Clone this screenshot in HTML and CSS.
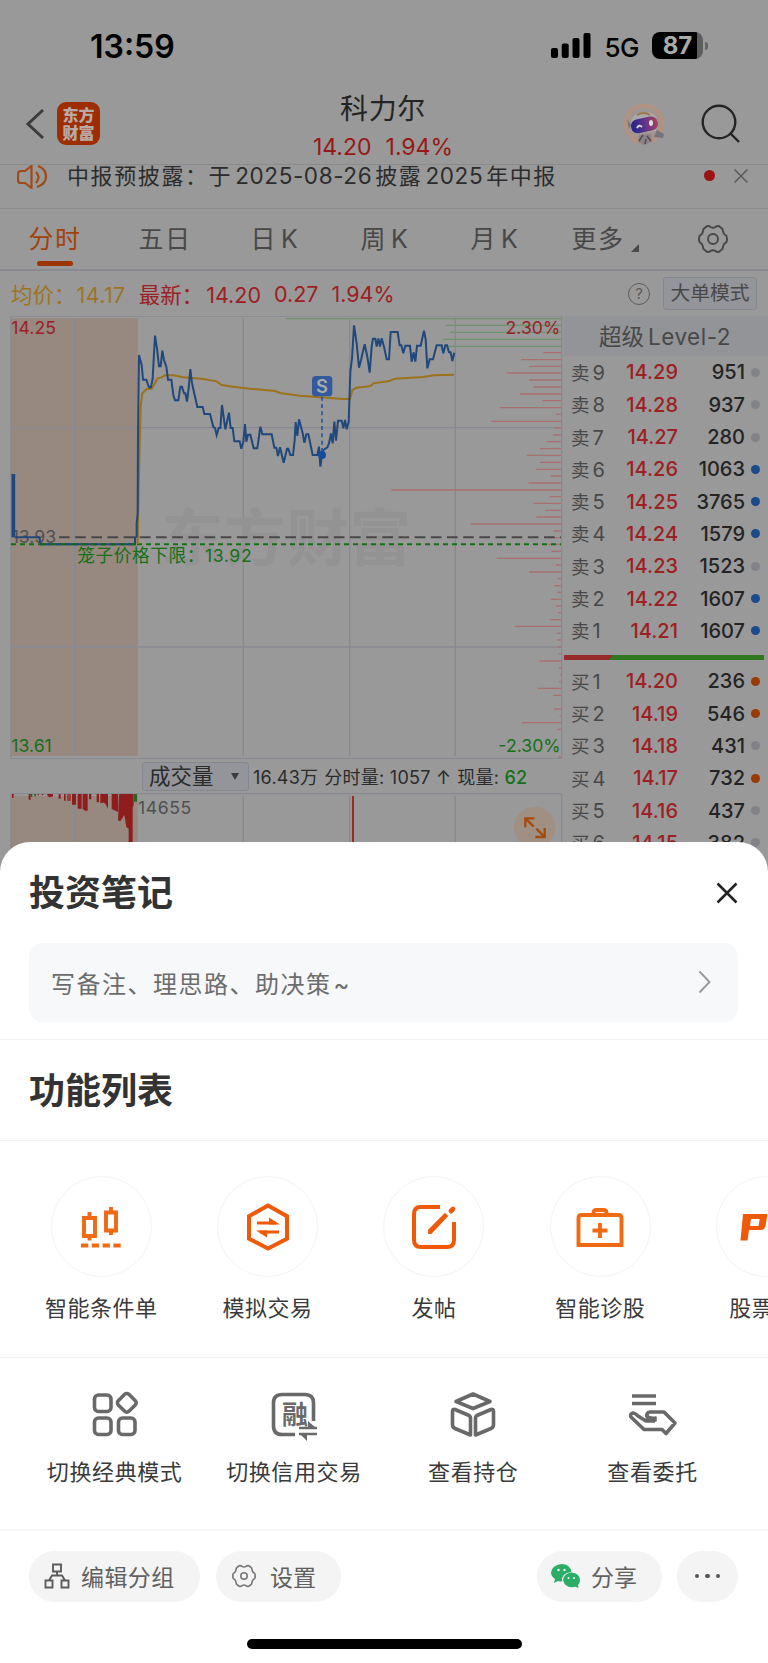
FILE: index.html
```html
<!DOCTYPE html>
<html lang="zh-CN">
<head>
    <meta charset="UTF-8" />
    <meta name="viewport" content="width=device-width, initial-scale=1.0" />
    <title>科力尔 14.20</title>
    <link rel="stylesheet" href="styles.css">
</head>
<body>
<div class="phone">
    <div class="status-bar">
        <span class="time">13:59</span>
        <div class="status-icons">
            <svg width="40" height="26" viewBox="0 0 40 26">
                <rect x="0" y="16" width="7" height="10" rx="2"/>
                <rect x="10.7" y="11.5" width="7" height="14.5" rx="2"/>
                <rect x="21.5" y="6" width="7" height="20" rx="2"/>
                <rect x="32.5" y="1" width="7" height="25" rx="2"/>
            </svg>
            <span class="network">5G</span>
            <div class="battery"><span>87</span></div>
            <div class="battery-tip"></div>
        </div>
    </div>

    <div class="header">
        <svg class="back" width="20" height="32" viewBox="0 0 20 32" fill="none" stroke="#3c3c3c" stroke-width="3">
            <path d="M18 2L3 16l15 14"/>
        </svg>
        <div class="logo">东方<br>财富</div>
        <div class="stock">
            <div class="stock-name">科力尔</div>
            <div class="stock-price"><span>14.20</span><span>1.94%</span></div>
        </div>
        <svg class="robot" width="42" height="42" viewBox="0 0 42 42">
            <circle cx="20" cy="20" r="18.5" fill="#a19591" stroke="#b5917f" stroke-width="3"/>
            <path d="M7 19Q8 9 19 8q12-1 15 9l-2 10-20 3z" fill="#aaa8aa"/>
            <path d="M13 11q7-4 13 0" fill="none" stroke="#a27545" stroke-width="2"/>
            <path d="M3 15l4 6-2 4z" fill="#76747c"/>
            <path d="M33 26l7 4-1 4-9-1z" fill="#74747a"/>
            <path d="M15 31l12-1 1 8-8 3-6-3z" fill="#8b8388"/>
            <path d="M19 31l-4 6m8-5l4 5m-5-2l-1 5" stroke="#50494c" stroke-width="1.5"/>
            <defs>
                <linearGradient id="visor"><stop offset="0" stop-color="#20238c"/><stop offset=".55" stop-color="#64358a"/><stop offset="1" stop-color="#ad4155"/></linearGradient>
            </defs>
            <rect x="7" y="14" width="27" height="14" rx="6.5" fill="url(#visor)" transform="rotate(-12 20 21)"/>
            <path d="M13 24q2-4 5-1" fill="none" stroke="#ddd" stroke-width="1.8"/>
            <ellipse cx="27" cy="19" rx="2" ry="3" fill="#ddd"/>
        </svg>
        <svg class="search" width="40" height="40" viewBox="0 0 40 40" fill="none" stroke="#242424" stroke-width="2.4">
            <circle cx="18" cy="18" r="16.3"/><path d="M29 29l9 9"/>
        </svg>
    </div>

    <div class="notice">
        <svg class="speaker" width="32" height="24" viewBox="0 0 32 24" fill="none" stroke="#a14a16" stroke-width="2.2">
            <path d="M14.5 1v22L8 18H4q-3 0-3-3V9q0-3 3-3h4zM19 7q5 5 0 11M21 1q8 3 8 10.5T20 22"/>
        </svg>
        <p>中报预披露：于<span class="num">2025-08-26</span>披露<span class="num">2025</span>年中报</p>
        <i class="red-dot"></i>
        <svg class="notice-close" width="16" height="16" viewBox="0 0 16 16" stroke="#5c5c5c" stroke-width="1.6"><path d="M1.5 1.5l13 13m0-13l-13 13"/></svg>
    </div>

    <div class="tabs">
        <span class="tab active">分时</span>
        <span class="tab">五日</span>
        <span class="tab">日<b>K</b></span>
        <span class="tab">周<b>K</b></span>
        <span class="tab">月<b>K</b></span>
        <span class="tab more">更多</span>
        <svg class="gear" width="30" height="30" viewBox="0 0 30 30" fill="none" stroke="#484848" stroke-width="1.9">
            <path d="M9 2.2Q11 1.5 12.5 3q2.5 1.6 5 0Q19 1.5 21 2.2L24.5 5Q25 8 26 9.800q1 1 2.500 2.200 1 3 0 6L26 20.200Q25 22 24.500 25L21 27.800q-2 .7-3.500-.8-2.500-1.600-5 0Q11 28.500 9 27.800L5.500 25Q5 22 4 20.200L1.500 18q-1-3 0-6L4 9.800Q5 8 5.500 5z"/>
            <circle cx="15" cy="15" r="5"/>
        </svg>
    </div>

    <div class="quote-line">
        <span class="avg">均价：<b>14.17</b></span>
        <span class="last">最新：<b>14.20</b></span>
        <b>0.27</b>
        <b>1.94%</b>
        <i class="help">?</i>
        <div class="mode">大单模式</div>
    </div>

    <div class="market">
        <div class="charts">
            <!-- intraday chart, three units per pixel -->
            <svg class="price-chart" width="564" height="443" viewBox="0 48 1692 1329">
                <rect x="33" y="55" width="380" height="1313" fill="#978880"/>
                <g class="grid">
                    <path d="M33 48H1684M33 1376H1684M33 48V1376M1685 48V1376"/>
                    <path d="M224 54V1368M730 54V1368M1049 54V1368M1366 54V1368M33 383H1684M33 1041H1684"/>
                </g>
                <text class="watermark" x="484" y="783" textLength="750">东方财富</text>
                <path class="hist-green" d="M858 56H1683M1337 76H1683M1350 97H1683M1330 118H1683M1345 139H1683"/>
                <path class="hist-red" d="M1630 158H1683M1563 179H1683M1588 199H1683M1522 219H1683M1588 240H1683M1600 261H1683M1560 282H1683M1627 302H1683M1499 323H1683M1667 343H1683M1474 364H1683M1664 384H1683M1659 405H1683M1640 425H1683M1620 446H1683M1580 466H1683M1620 487H1683M1607 508H1683M1651 528H1683M1586 549H1683M1174 570H1683M1648 590H1683M1600 610H1683M1636 631H1683M1609 651H1683M1411 672H1683M1660 693H1683M1645 713H1683M1645 733H1683M1655 754H1683M1490 775H1683M1668 795H1683M1588 816H1683M1672 836H1683M1662 857H1683M1672 877H1683M1652 898H1683M1668 918H1683M1674 938H1683M1649 959H1683M1545 979H1683M1670 1000H1683M1672 1020H1683M1672 1041H1683M1676 1061H1683M1619 1083H1683M1676 1104H1683M1680 1124H1683M1677 1145H1683M1613 1165H1683M1660 1186H1683M1662 1227H1683M1679 1247H1683M1565 1268H1683M1672 1288H1683M1675 1371H1683"/>
                <text class="lbl-dark" x="35" y="730">13.93</text>
                <path class="base-line" d="M177 712H1683"/>
                <path class="cage-line" d="M33 733H1683"/>
                <polyline class="avg-path" points="413,733 416,560 420,400 422,320 427,280 440,267 455,266 462,255 472,236 485,232 495,226 520,226 550,232 605,236 650,244 665,255 700,260 750,266 825,273 840,279 900,287 960,292 1030,297 1050,297 1057,270 1070,263 1112,258 1120,250 1168,243 1185,236 1270,231 1300,226 1362,224"/>
                <path class="price-path thick" d="M40 522V712"/>
                <polyline class="price-path" points="45,712 118,712 122,733 405,733 405,712 410,710 410,670 413,640 414,400 417,165 425,195 429,239 439,239 447,262 453,262 458,235 465,107 471,145 477,199 482,199 487,152 492,180 499,200 504,239 514,239 520,285 525,301 535,301 541,260 546,260 552,280 556,280 561,305 566,265 571,207 576,250 592,321 608,321 613,342 630,342 640,381 645,384 650,405 656,384 661,384 666,315 676,388 687,338 692,384 698,384 703,424 719,424 724,446 730,425 735,372 739,425 744,404 751,404 761,445 772,445 781,380 787,403 815,403 823,443 829,443 834,468 840,442 851,488 861,446 865,446 871,465 879,465 884,420 887,366 892,408 897,358 908,400 913,428 919,403 925,403 938,465 952,465 957,440 961,500 966,465 970,450 982,442 987,430 993,400 998,430 1003,365 1008,422 1014,362 1025,362 1030,385 1035,360 1040,388 1046,365 1051,215 1056,175 1062,76 1070,130 1077,203 1083,180 1094,133 1102,170 1109,218 1115,140 1119,116 1126,116 1130,140 1135,115 1140,140 1145,115 1152,140 1160,178 1167,178 1172,96 1193,96 1199,136 1204,136 1210,160 1216,137 1230,137 1235,185 1241,157 1246,185 1251,137 1262,137 1272,92 1277,118 1282,205 1289,178 1299,178 1310,136 1325,136 1330,160 1336,136 1341,136 1347,157 1352,157 1357,183 1363,158"/>
                <path d="M122 733H405" stroke="#156b15" stroke-width="6" stroke-dasharray="16 14"/>
                <path d="M966 290V465" stroke="#2456a0" stroke-width="5" stroke-dasharray="12 10"/>
                <circle cx="966" cy="465" r="12" fill="#154c9a"/>
                <rect x="936" y="228" width="61" height="61" rx="11" fill="#335a9c"/>
                <text class="sell-mark" x="966" y="278">S</text>
                <text class="lbl-red" x="34" y="101">14.25</text>
                <text class="lbl-red end" x="1681" y="101">2.30%</text>
                <text class="lbl-green" x="34" y="1356">13.61</text>
                <text class="lbl-green end" x="1682" y="1356">-2.30%</text>
                <text class="lbl-green" x="232" y="786" textLength="523">笼子价格下限：13.92</text>
            </svg>
            <div class="volume-row">
                <div class="volume-select">成交量<i></i></div>
                <span>16.43万</span>
                <span>分时量: 1057 ↑</span>
                <span>现量: <em>62</em></span>
            </div>
            <svg width="564" height="60" viewBox="0 1479 1692 180">
                <rect x="33" y="1488" width="380" height="171" fill="#978880"/>
                <g class="grid"><path d="M33 1481H1684M33 1481V1659M1685 1481V1659M224 1488V1659M730 1488V1659M1049 1488V1659M1366 1488V1659"/></g>
                <path d="M36 1482h5v11h-5zM86 1482h6v17h-6zM113 1482h4v4h-4zM125 1482h5v4h-5zM142 1482h17v7l-9 3-8-4zM176 1482h6v14h-6zM192 1482h5v20h-5zM202 1482h4v21h-4zM208 1482h4v21h-4zM216 1482h12v32h-12zM233 1482h12v44h-12zM248 1482h15v50h-8l-7-6zM267 1482h7v16h-7zM290 1482h7v25h-7zM301 1482h8v27h-8zM309 1482h15v44l-8-15-7-4zM335 1482h19v54l-19-9zM357 1482h44v32l-3 9v136h-12v-73l-7-5-6-36-12 19-7-3z" fill="#901d1d"/>
                <path d="M92 1482h5v9h-5zM103 1482h5v7h-5zM402 1482h9v23h-9z" fill="#2b641c"/>
                <path d="M1059 1488V1659" stroke="#a32525" stroke-width="6"/>
                <text class="lbl-gray" x="414" y="1541" textLength="160">14655</text>
                <circle cx="1604" cy="1582" r="62" fill="#a09083"/>
                <path d="M1576 1582v-27h27M1576 1555l25 25M1634 1584v27h-28M1634 1611l-25-25" fill="none" stroke="#a44a0d" stroke-width="7"/>
            </svg>
        </div>

        <div class="order-book">
            <div class="book-title">超级<span>Level-2</span></div>
            <div class="order"><span>卖<b>9</b></span><span class="price">14.29</span><span class="qty">951</span><i></i></div>
            <div class="order"><span>卖<b>8</b></span><span class="price">14.28</span><span class="qty">937</span><i></i></div>
            <div class="order"><span>卖<b>7</b></span><span class="price">14.27</span><span class="qty">280</span><i></i></div>
            <div class="order"><span>卖<b>6</b></span><span class="price">14.26</span><span class="qty">1063</span><i class="blue"></i></div>
            <div class="order"><span>卖<b>5</b></span><span class="price">14.25</span><span class="qty">3765</span><i class="blue"></i></div>
            <div class="order"><span>卖<b>4</b></span><span class="price">14.24</span><span class="qty">1579</span><i class="blue"></i></div>
            <div class="order"><span>卖<b>3</b></span><span class="price">14.23</span><span class="qty">1523</span><i></i></div>
            <div class="order"><span>卖<b>2</b></span><span class="price">14.22</span><span class="qty">1607</span><i class="blue"></i></div>
            <div class="order"><span>卖<b>1</b></span><span class="price">14.21</span><span class="qty">1607</span><i class="blue"></i></div>
            <div class="ratio"></div>
            <div class="order"><span>买<b>1</b></span><span class="price">14.20</span><span class="qty">236</span><i class="orange"></i></div>
            <div class="order"><span>买<b>2</b></span><span class="price">14.19</span><span class="qty">546</span><i class="orange"></i></div>
            <div class="order"><span>买<b>3</b></span><span class="price">14.18</span><span class="qty">431</span><i></i></div>
            <div class="order"><span>买<b>4</b></span><span class="price">14.17</span><span class="qty">732</span><i class="orange"></i></div>
            <div class="order"><span>买<b>5</b></span><span class="price">14.16</span><span class="qty">437</span><i></i></div>
            <div class="order"><span>买<b>6</b></span><span class="price">14.15</span><span class="qty">382</span><i></i></div>
        </div>
    </div>

    <div class="sheet">
        <div class="sheet-head">
            <h2>投资笔记</h2>
            <svg width="22" height="22" viewBox="0 0 22 22" stroke="#222" stroke-width="2.5"><path d="M1.5 1.5l19 19m0-19l-19 19"/></svg>
        </div>
        <div class="note-box">
            <span>写备注、理思路、助决策<b>~</b></span>
            <svg width="13" height="24" viewBox="0 0 13 24" fill="none" stroke="#999" stroke-width="1.9"><path d="M1.5 1.5L11.5 12l-10 10.5"/></svg>
        </div>
        <div class="section-title"><h2>功能列表</h2></div>

        <div class="features">
            <div class="feature">
                <div class="circle">
                    <svg width="50" height="50" viewBox="0 0 50 50" fill="none" stroke="#ef6a12" stroke-width="3.9">
                        <path d="M8 16h11v18H8zM13.5 10v6m0 18v4.5M30 10.5h10v18H30zM35 5v5.5m0 18V33"/>
                        <path d="M5 43.5h40" stroke-dasharray="7.3 3.5"/>
                    </svg>
                </div>
                <span>智能条件单</span>
            </div>
            <div class="feature">
                <div class="circle">
                    <svg width="50" height="50" viewBox="0 0 50 50" fill="none" stroke="#ee5a09" stroke-width="4">
                        <path d="M25 3.5l19 10.7v22.5L25 46.5 6 36.7V14.2z"/>
                        <path d="M14 21h19M17 30h19" stroke-width="2.9"/>
                        <path d="M26 15.5v7h11zM24 35.5v-7H13z" fill="#ee5a09" stroke="none"/>
                    </svg>
                </div>
                <span>模拟交易</span>
            </div>
            <div class="feature">
                <div class="circle">
                    <svg width="50" height="50" viewBox="0 0 50 50" fill="none" stroke="#ee5a09" stroke-width="4">
                        <path d="M31 5H12q-7 0-7 7v26q0 7 7 7h26q7 0 7-7V20"/>
                        <path d="M20 31v-3l16-16 2 2-16 17z" fill="#ee5a09" stroke-width="1.8"/>
                        <path d="M42 9l2-2" stroke-width="4.8" stroke-linecap="round"/>
                    </svg>
                </div>
                <span>发帖</span>
            </div>
            <div class="feature">
                <div class="circle">
                    <svg width="50" height="50" viewBox="0 0 50 50" fill="none" stroke="#ef6a12" stroke-width="3.9">
                        <path d="M3.5 43V16q0-3 3-3h37q3 0 3 3v27zM18.5 13v-2q0-3 3-3h7q3 0 3 3v2M25 21v15m-7.5-7.5h15"/>
                    </svg>
                </div>
                <span>智能诊股</span>
            </div>
            <div class="feature">
                <div class="circle">
                    <svg class="pk" width="50" height="50" viewBox="0 0 50 50" fill="#ee5a09" fill-rule="evenodd">
                        <path d="M1 12h23.5q1 0 .5 3l-1.5 9q-1 4-5 4H7l-1.5 10.5H-1.500zM9 17l-1 7h8.500l1.200-7z"/>
                        <path d="M31 12h8l-4 26h-8z"/>
                    </svg>
                </div>
                <span>股票PK</span>
            </div>
        </div>

        <div class="actions">
            <div class="action">
                <svg width="50" height="50" viewBox="0 0 50 50" fill="none" stroke="#696969" stroke-width="3.6">
                    <rect x="4.5" y="5" width="16.5" height="16.5" rx="4"/>
                    <rect x="4.5" y="28" width="16.5" height="16.5" rx="4"/>
                    <rect x="28.5" y="28" width="16.5" height="16.5" rx="4"/>
                    <rect x="29.3" y="5.3" width="15" height="15" rx="3" transform="rotate(45 36.8 12.8)"/>
                </svg>
                <span>切换经典模式</span>
            </div>
            <div class="action">
                <svg width="50" height="50" viewBox="0 0 50 50" fill="none" stroke="#696969" stroke-width="3.6">
                    <path d="M26 44.5H13q-8.5 0-8.5-8.5V13q0-8.5 8.5-8.5h23q8.5 0 8.5 8.5v18"/>
                    <text class="rong" x="26" y="34">融</text>
                    <path d="M30 38h18M30 44h18" stroke-width="2.6"/>
                    <path d="M39 31v8h9zM38 51v-8h-8z" fill="#696969" stroke="none"/>
                </svg>
                <span>切换信用交易</span>
            </div>
            <div class="action">
                <svg width="50" height="50" viewBox="0 0 50 50" fill="none" stroke="#696969" stroke-width="3.6" stroke-linejoin="round">
                    <path d="M25 4L42 11.5 25 18.5 8 11.5zM7 19.5L20 25q2.5 1 2.5 3v17L7 38.5q-2.5-1-2.5-4V21q0-2 2.5-1.5zM43 19.5L30 25q-2.5 1-2.5 3v17L43 38.5q2.5-1 2.5-4V21q0-2-2.5-1.5z"/>
                </svg>
                <span>查看持仓</span>
            </div>
            <div class="action">
                <svg width="50" height="50" viewBox="0 0 50 50" fill="none" stroke="#696969" stroke-width="3.6" stroke-linejoin="round">
                    <path d="M4 6h24M4 13.5h24"/>
                    <path d="M19 27q-1-4.5 3-5h14L47 33l-9 10.5-4-4H16L3 27q-1.5-3 2-4 2 0 5 3l8 5h9"/>
                    <path d="M19 25q3 3 9 2v4H18z" fill="#696969" stroke-width="1.5"/>
                </svg>
                <span>查看委托</span>
            </div>
        </div>

        <div class="footer">
            <div class="pill edit">
                <svg width="26" height="26" viewBox="0 0 26 26" fill="none" stroke="#5c5c5c" stroke-width="1.9">
                    <path d="M9 1.5h8v7H9zM1.5 17.5h7v7h-7zM17.5 17.5h7v7h-7zM13 8.5v4M5 17.5l3-5h10l3 5"/>
                </svg>
                <span>编辑分组</span>
            </div>
            <div class="pill setting">
                <svg width="24" height="24" viewBox="0 0 30 30" fill="none" stroke="#777" stroke-width="2">
                    <path d="M9 2.2Q11 1.5 12.5 3q2.5 1.6 5 0Q19 1.5 21 2.2L24.5 5Q25 8 26 9.800q1 1 2.500 2.200 1 3 0 6L26 20.200Q25 22 24.500 25L21 27.800q-2 .7-3.500-.8-2.500-1.600-5 0Q11 28.500 9 27.800L5.500 25Q5 22 4 20.200L1.500 18q-1-3 0-6L4 9.800Q5 8 5.500 5z"/>
                    <circle cx="15" cy="15" r="4"/>
                </svg>
                <span>设置</span>
            </div>
            <div class="pill share">
                <svg width="30" height="25" viewBox="0 0 30 25">
                    <path d="M3 19l1-4Q0 12 0 8.5 1 1 10.5 0 19 0 20.5 8 10 9 11 17.5q-2 0-4-.5z" fill="#2aae67"/>
                    <path d="M12 16q1-7 8.5-7.5 8 .5 8.5 7.5 0 3-2 5l.5 3-3-1.3Q14 25 12 16z" fill="#2aae67"/>
                    <g fill="#f4f4f4"><circle cx="7.5" cy="6" r="1.2"/><circle cx="13.5" cy="6" r="1.2"/><circle cx="17.5" cy="14" r="1"/><circle cx="23" cy="14" r="1"/></g>
                </svg>
                <span>分享</span>
            </div>
            <div class="pill dots"><i></i><i></i><i></i></div>
        </div>
        <div class="home-bar"></div>
    </div>
</div>
</body>
</html>
```
FILE: styles.css
```css
* {
    box-sizing: border-box;
}
body {
    margin: 0;
    font-family: Inter, "Noto Sans CJK SC", sans-serif;
}
h2, p {
    margin: 0;
}
i, em {
    font-style: normal;
}
.phone {
    position: relative;
    width: 768px;
    height: 1663px;
    overflow: hidden;
    background: #999;
}

/* status bar */
.status-bar {
    height: 92px;
    padding: 0 60px 0 90px;
    display: flex;
    justify-content: space-between;
}
.time {
    margin-top: 27px;
    font-size: 32px;
    line-height: 40px;
    font-weight: 600;
}
.status-icons {
    display: flex;
    align-items: center;
    height: 92px;
}
.status-icons svg {
    margin-top: -2px;
}
.network {
    margin: 2px 13px 0 13px;
    font-size: 26px;
    font-weight: 500;
    letter-spacing: -0.5px;
}
.battery {
    width: 51px;
    height: 27px;
    margin-top: -1px;
    border-radius: 8px;
    background: linear-gradient(90deg, #000 45px, #5e5e5e 45px);
    color: #aaa;
    font-size: 24px;
    font-weight: 700;
    line-height: 27px;
    text-align: center;
}
.battery-tip {
    width: 3px;
    height: 8px;
    margin-left: 2px;
    border-radius: 0 3px 3px 0;
    background: #666;
}

/* header */
.header {
    height: 73px;
    display: flex;
    border-bottom: 1px solid #8b8b8b;
}
.back {
    margin: 16px 0 0 25px;
}
.logo {
    width: 43px;
    height: 43px;
    margin: 10px 0 0 12px;
    padding-top: 4px;
    border-radius: 9px;
    background: #9d2e04;
    color: #b9aaa5;
    font-size: 16px;
    line-height: 18px;
    font-weight: 900;
    text-align: center;
}
.stock {
    width: 200px;
    margin-left: 183px;
    text-align: center;
}
.stock-name {
    color: #242424;
    font-size: 28px;
    line-height: 34px;
    letter-spacing: 0.6px;
}
.stock-price {
    display: flex;
    justify-content: center;
    gap: 14px;
    margin-top: 7px;
    color: #981818;
    font-size: 23px;
    line-height: 28px;
}
.robot {
    margin: 12px 0 0 141px;
}
.search {
    margin: 12px 0 0 35px;
}

/* notice */
.notice {
    height: 44px;
    overflow: hidden;
    display: flex;
    align-items: flex-start;
    border-bottom: 1px solid #8b8b8b;
    color: #2c2c2c;
}
.speaker {
    margin: 0 0 0 17px;
}
.notice p {
    width: 500px;
    margin-left: 18px;
    margin-top: -5px;
    font-size: 22px;
    line-height: 32px;
    letter-spacing: 1.6px;
    white-space: nowrap;
}
.notice .num {
    padding: 0 3px 0 3px;
    font-size: 22.5px;
    letter-spacing: 0.6px;
}
.red-dot {
    width: 11px;
    height: 11px;
    margin: 5px 0 0 137px;
    border-radius: 50%;
    background: #9b1414;
}
.notice-close {
    margin: 3px 0 0 18px;
}

/* tabs */
.tabs {
    height: 62px;
    display: flex;
    border-bottom: 2px solid #888a8f;
    color: #484848;
    font-size: 25px;
    line-height: 60px;
}
.tab {
    width: 110px;
    text-align: center;
    white-space: nowrap;
    letter-spacing: 1.5px;
}
.tab b {
    margin-left: 4px;
    font-weight: 400;
}
.tab.active {
    color: #a2420b;
}
.tab.active::after {
    content: "";
    display: block;
    width: 36px;
    height: 5px;
    margin: -8px auto 0;
    border-radius: 3px;
    background: #9b3400;
}
.tab.more::after {
    content: "";
    display: inline-block;
    margin-left: 6px;
    border-left: 8px solid transparent;
    border-bottom: 8px solid #484848;
    vertical-align: -4px;
}
.gear {
    margin: 15px 0 0 38px;
}

/* quote line */
.quote-line {
    height: 45px;
    padding: 0 11px;
    display: flex;
    align-items: center;
    gap: 13px;
    color: #9c2024;
    font-size: 21.5px;
    white-space: nowrap;
}
.quote-line b {
    font-weight: 400;
}
.quote-line .avg {
    color: #9c7425;
}
.avg b {
    margin-left: 1px;
    letter-spacing: 0.4px;
}
.last b {
    margin-left: 3px;
}
.help {
    width: 22px;
    height: 22px;
    margin-left: auto;
    border: 1.5px solid #5c5c5c;
    border-radius: 50%;
    color: #5c5c5c;
    font-size: 15px;
    line-height: 19px;
    text-align: center;
}
.mode {
    width: 94px;
    height: 33px;
    border: 1px solid #85888e;
    border-radius: 3px;
    background: #94959a;
    color: #484848;
    font-size: 19.8px;
    line-height: 30px;
    text-align: center;
}

/* chart */
.market {
    display: flex;
    height: 560px;
    overflow: hidden;
}
.charts {
    width: 564px;
}
.charts svg {
    display: block;
}
.charts text {
    font-size: 53px;
}
.grid path {
    fill: none;
    stroke: #888a92;
    stroke-width: 4px;
}
.charts .watermark {
    font-size: 186px;
    font-weight: 700;
    fill: #939393;
}
.hist-green {
    stroke: #6c956c;
    stroke-width: 4px;
}
.hist-red {
    stroke: #a97070;
    stroke-width: 4px;
}
.base-line {
    stroke: #484848;
    stroke-width: 6px;
    stroke-dasharray: 32 16.5;
}
.cage-line {
    stroke: #157015;
    stroke-width: 6px;
    stroke-dasharray: 15 12;
}
.avg-path {
    fill: none;
    stroke: #9c721b;
    stroke-width: 6px;
}
.price-path {
    fill: none;
    stroke: #20487c;
    stroke-width: 6px;
}
.price-path.thick {
    stroke-width: 11px;
}
.lbl-red {
    fill: #992227;
}
.lbl-green {
    fill: #157018;
}
.lbl-gray, .lbl-dark {
    fill: #505050;
}
.end {
    text-anchor: end;
}
.charts .sell-mark {
    fill: #aaa;
    font-size: 55px;
    font-weight: 600;
    text-anchor: middle;
}
.volume-row {
    height: 34px;
    padding-left: 142px;
    display: flex;
    align-items: center;
    color: #2b2b2b;
    font-size: 18px;
    letter-spacing: 0.25px;
    white-space: nowrap;
}
.volume-row span {
    margin-right: 6px;
}
.volume-row em {
    color: #157018;
    font-weight: 500;
}
.volume-select {
    width: 107px;
    height: 29px;
    margin-right: 4px;
    padding: 0 9px 0 6px;
    display: flex;
    align-items: center;
    justify-content: space-between;
    border: 1px solid #85888e;
    border-radius: 3px;
    background: #94959a;
    font-size: 21.5px;
    letter-spacing: 0;
    line-height: 27px;
}
.volume-select i {
    border: 4px solid transparent;
    border-top: 7px solid #3c3c3c;
    border-bottom: 0;
}

/* order book */
.order-book {
    width: 204px;
}
.book-title {
    height: 40.2px;
    padding-right: 2px;
    background: #929498;
    color: #484848;
    font-size: 22.5px;
    line-height: 41px;
    text-align: center;
}
.book-title span {
    margin-left: 4px;
    letter-spacing: 0.5px;
}
.order {
    height: 32.33px;
    padding-left: 7px;
    display: flex;
    align-items: center;
    color: #484848;
    font-size: 18.5px;
}
.order span:first-child {
    width: 40px;
    margin-top: -1px;
}
.order b {
    margin-left: 3px;
    font-size: 20px;
    font-weight: 400;
}
.order .price {
    width: 67px;
    color: #9c2024;
    font-size: 20px;
    font-weight: 500;
    text-align: right;
}
.order .qty {
    width: 67px;
    color: #242424;
    font-size: 20px;
    font-weight: 500;
    text-align: right;
}
.order i {
    width: 9px;
    height: 9px;
    margin-left: 6px;
    border-radius: 50%;
    background: #828389;
}
.order .blue {
    background: #184b8c;
}
.order .orange {
    background: #9b3a00;
}
.ratio {
    width: 200px;
    height: 5px;
    margin: 8px 0 5px;
    background: linear-gradient(120deg, #982a2a 42px, #30781f 42px);
}

/* bottom sheet, covers the quote page */
.sheet {
    position: absolute;
    left: 0;
    top: 842px;
    width: 768px;
    height: 821px;
    border-radius: 30px 30px 0 0;
    background: #fff;
    overflow: hidden;
}
.sheet h2 {
    color: #333;
    font-size: 36px;
    line-height: 50px;
    font-weight: 600;
}
.sheet-head {
    height: 101px;
    padding: 0 30px 0 29px;
    display: flex;
    align-items: center;
    justify-content: space-between;
}
.note-box {
    height: 79px;
    margin: 0 30px 0 29px;
    padding: 0 27px 1px 22px;
    display: flex;
    align-items: center;
    justify-content: space-between;
    border-radius: 14px;
    background: #f7f8fa;
    color: #6c6c6c;
    font-size: 24px;
    letter-spacing: 1.5px;
}
.note-box b {
    margin-left: 2px;
    font-weight: 400;
}
.section-title {
    height: 102px;
    margin-top: 17px;
    padding: 26px 29px 0;
    border-top: 1px solid #f3f3f3;
    border-bottom: 1px solid #f3f3f3;
}
.features {
    height: 217px;
    padding: 35px 0 0 18px;
    display: flex;
    border-bottom: 1px solid #f3f3f3;
}
.feature {
    flex: 0 0 166.4px;
    display: flex;
    flex-direction: column;
    align-items: center;
    color: #3a3a3a;
    font-size: 22px;
    letter-spacing: 0.5px;
}
.circle {
    width: 101px;
    height: 101px;
    margin-bottom: 15px;
    display: flex;
    align-items: center;
    justify-content: center;
    border: 1.5px solid #f4f4f4;
    border-radius: 50%;
}
.pk {
    overflow: visible;
}
.feature span, .action span {
    line-height: 32px;
}
.actions {
    height: 173px;
    padding: 32px 0 0 25px;
    display: flex;
    border-bottom: 2px solid #f6f6f6;
}
.action {
    width: 179.3px;
    display: flex;
    flex-direction: column;
    align-items: center;
    gap: 16px;
    color: #3a3a3a;
    font-size: 22px;
    letter-spacing: 0.6px;
}
.action svg {
    overflow: visible;
}
.rong {
    fill: #696969;
    stroke: none;
    font-size: 26px;
    font-weight: 700;
    text-anchor: middle;
    letter-spacing: 0;
}
.footer {
    padding: 20px 30px 0 29px;
    display: flex;
}
.pill {
    height: 51px;
    padding-bottom: 1px;
    display: flex;
    align-items: center;
    border-radius: 26px;
    background: #f4f4f4;
    color: #616161;
    font-size: 23px;
    white-space: nowrap;
}
.edit {
    width: 171px;
    padding-left: 15px;
    gap: 11px;
    letter-spacing: 0.4px;
}
.setting {
    width: 125px;
    margin-left: 16px;
    padding-left: 16px;
    gap: 14px;
}
.share {
    width: 125px;
    margin-left: auto;
    padding-left: 14px;
    gap: 10px;
}
.dots {
    width: 61px;
    margin-left: 15px;
    justify-content: center;
    gap: 6px;
}
.dots i {
    width: 4.5px;
    height: 4.5px;
    border-radius: 50%;
    background: #555;
}
.home-bar {
    width: 275px;
    height: 10px;
    margin: 37px auto 0;
    border-radius: 5px;
    background: #000;
}
```
